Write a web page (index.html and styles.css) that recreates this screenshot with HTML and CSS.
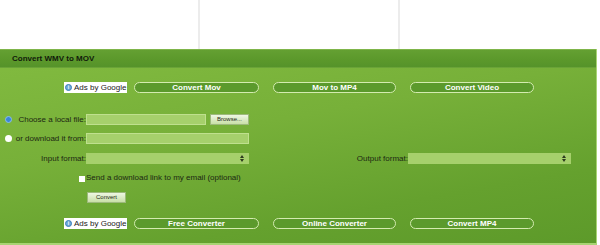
FILE: index.html
```html
<!DOCTYPE html>
<html>
<head>
<meta charset="utf-8">
<link rel="stylesheet" href="styles.css">
</head>
<body>
<div class="top">
  <div class="cell c1"></div>
  <div class="cell c2"></div>
  <div class="cell c3"></div>
</div>
<div class="panel">
  <div class="head">Convert WMV to MOV</div>
  <div class="ads first">
    <div class="adsby"><span class="info">i</span>Ads by Google</div>
    <div class="pill p1">Convert Mov</div>
    <div class="pill p2">Mov to MP4</div>
    <div class="pill p3">Convert Video</div>
  </div>
  <div class="form">
    <div class="row r1">
      <div class="label"><span class="radio on"></span>Choose a local file:</div>
      <div class="field short"></div>
      <div class="btn browse">Browse...</div>
    </div>
    <div class="row r2">
      <div class="label"><span class="radio"></span>or download it from:</div>
      <div class="field long"></div>
    </div>
    <div class="row r3">
      <div class="label">Input format:</div>
      <div class="field select"><svg class="arr" width="4" height="7" viewBox="0 0 4 7"><path d="M0 3 L2 0 L4 3Z M0 4 L2 7 L4 4Z" fill="#2c3a1e"/></svg></div>
      <div class="label out">Output format:</div>
      <div class="field select"><svg class="arr" width="4" height="7" viewBox="0 0 4 7"><path d="M0 3 L2 0 L4 3Z M0 4 L2 7 L4 4Z" fill="#2c3a1e"/></svg></div>
    </div>
    <div class="row r4">
      <span class="check"></span><span class="ctext">Send a download link to my email (optional)</span>
    </div>
    <div class="row r5">
      <div class="btn convert">Convert</div>
    </div>
  </div>
  <div class="ads second">
    <div class="adsby"><span class="info">i</span>Ads by Google</div>
    <div class="pill p1">Free Converter</div>
    <div class="pill p2">Online Converter</div>
    <div class="pill p3">Convert MP4</div>
  </div>
</div>
</body>
</html>
```
FILE: styles.css
```css
html, body {
  margin: 0;
  padding: 0;
  background: #ffffff;
  font-family: "Liberation Sans", Arial, sans-serif;
  font-size: 8px;
  color: #1c2812;
}
.top {
  display: flex;
  height: 49px;
}
.cell {
  height: 49px;
  box-sizing: border-box;
}
.c1 { width: 200px; border-right: 2px solid #ececec; }
.c2 { width: 200px; border-right: 2px solid #ececec; }
.c3 { flex: 1; }
.panel {
  width: 597px;
  height: 196px;
  box-sizing: border-box;
  border-right: 1px solid #a8d474;
  border-bottom: 2px solid #a8d474;
  background: linear-gradient(170deg, #82bb40 0%, #77b039 40%, #65a12e 75%, #5d9a2a 100%);
  display: flex;
  flex-direction: column;
}
.head {
  height: 19px;
  box-sizing: border-box;
  border-top: 1px solid #7fb54a;
  border-bottom: 1px solid #6aa338;
  background: linear-gradient(#64a032, #5b982b 60%, #55932a);
  padding-left: 12px;
  line-height: 17px;
  font-weight: bold;
  font-size: 8px;
  color: #111a0a;
}
.ads {
  display: flex;
  align-items: center;
  padding-left: 64px;
  height: 12px;
}
.ads.first { margin-top: 13px; }
.ads.second { margin-top: 14px; }
.adsby {
  width: 63px;
  height: 11px;
  background: #ffffff;
  color: #1a1a1a;
  font-size: 8px;
  line-height: 11px;
  display: flex;
  align-items: center;
  box-sizing: border-box;
  padding-left: 1px;
  white-space: nowrap;
}
.info {
  width: 7px;
  height: 7px;
  border-radius: 50%;
  background: #6ea8d8;
  border: 1px solid #3d7fb8;
  box-sizing: border-box;
  color: #fff;
  font-size: 5px;
  line-height: 5px;
  text-align: center;
  font-weight: bold;
  margin-right: 2px;
}
.pill {
  height: 11px;
  box-sizing: border-box;
  border: 1px solid #d4ebb0;
  border-radius: 6px;
  background: #5b9a2c;
  color: #ffffff;
  font-weight: bold;
  font-size: 8px;
  line-height: 9px;
  text-align: center;
  white-space: nowrap;
}
.p1 { width: 125px; margin-left: 7px; }
.p2 { width: 123px; margin-left: 14px; }
.p3 { width: 124px; margin-left: 14px; }
.form {
  margin-top: 21px;
  display: flex;
  flex-direction: column;
}
.row {
  display: flex;
  align-items: center;
  height: 11px;
}
.r2 { margin-top: 8px; }
.r3 { margin-top: 9px; }
.r4 { margin-top: 8px; padding-left: 79px; }
.r5 { margin-top: 9px; padding-left: 87px; }
.label {
  width: 86px;
  display: flex;
  justify-content: flex-end;
  align-items: center;
  white-space: nowrap;
  font-size: 8px;
  color: #1c2812;
}
.r1 .label .radio { margin-right: 6px; }
.r2 .label .radio { margin-right: 4px; }
.label.out { width: 159px; }
.radio {
  width: 7px;
  height: 7px;
  border-radius: 50%;
  background: #ffffff;
  box-sizing: border-box;
  margin-right: 5px;
}
.radio.on {
  background: #3a86d6;
  border: 1.5px solid #8cbcec;
}
.field {
  height: 11px;
  box-sizing: border-box;
  background: #a6d06c;
  border: 1px solid #bfe08e;
  position: relative;
}
.short { width: 120px; }
.long { width: 163px; }
.select { width: 163px; border-color: #a6d06c; }
.arr {
  position: absolute;
  right: 4px;
  top: 1px;
}
.btn {
  height: 11px;
  box-sizing: border-box;
  border: 1px solid #9db97c;
  background: linear-gradient(#eef6e2, #c9e0a8);
  color: #1c2812;
  font-size: 6px;
  line-height: 9px;
  text-align: center;
}
.browse { width: 39px; margin-left: 4px; }
.convert { width: 39px; }
.check {
  width: 6px;
  height: 6px;
  background: #ffffff;
  margin-right: 1px;
  margin-top: 2px;
}
.ctext {
  font-size: 8px;
  color: #1c2812;
}
```
